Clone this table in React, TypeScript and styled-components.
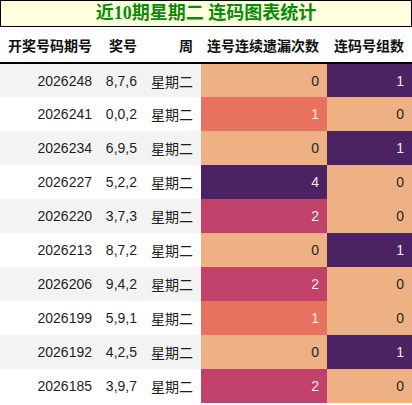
import styled, { createGlobalStyle } from "styled-components";

const GlobalStyle = createGlobalStyle`
  html, body {
    margin: 0;
    padding: 0;
    background: #ffffff;
  }
  body {
    font-family: "Liberation Sans", "Noto Sans CJK SC", sans-serif;
  }
`;

interface Row {
  issue: string;
  nums: string;
  week: string;
  miss: number;
  groups: number;
}

const rows: Row[] = [
  { issue: "2026248", nums: "8,7,6", week: "星期二", miss: 0, groups: 1 },
  { issue: "2026241", nums: "0,0,2", week: "星期二", miss: 1, groups: 0 },
  { issue: "2026234", nums: "6,9,5", week: "星期二", miss: 0, groups: 1 },
  { issue: "2026227", nums: "5,2,2", week: "星期二", miss: 4, groups: 0 },
  { issue: "2026220", nums: "3,7,3", week: "星期二", miss: 2, groups: 0 },
  { issue: "2026213", nums: "8,7,2", week: "星期二", miss: 0, groups: 1 },
  { issue: "2026206", nums: "9,4,2", week: "星期二", miss: 2, groups: 0 },
  { issue: "2026199", nums: "5,9,1", week: "星期二", miss: 1, groups: 0 },
  { issue: "2026192", nums: "4,2,5", week: "星期二", miss: 0, groups: 1 },
  { issue: "2026185", nums: "3,9,7", week: "星期二", miss: 2, groups: 0 },
];

// heat colours, light to dark
const PEACH = "#edb183";
const CORAL = "#e8725f";
const ROSE = "#c1416a";
const PLUM = "#4b2262";

function heat(value: number, max: number) {
  if (value === 0) return PEACH;
  if (value >= max) return PLUM;
  const t = value / max;
  if (t <= 0.25) return CORAL;
  return ROSE;
}

export default function App() {
  return (
    <>
      <GlobalStyle />
      <Wrap>
        <Title>近10期星期二 连码图表统计</Title>
        <Table>
          <colgroup>
            <col style={{ width: 100 }} />
            <col style={{ width: 45 }} />
            <col style={{ width: 56 }} />
            <col style={{ width: 126 }} />
            <col style={{ width: 85 }} />
          </colgroup>
          <thead>
            <tr>
              <Th>开奖号码期号</Th>
              <Th>奖号</Th>
              <Th>周</Th>
              <Th>连号连续遗漏次数</Th>
              <Th>连码号组数</Th>
            </tr>
          </thead>
          <tbody>
            {rows.map((r, i) => (
              <Tr key={r.issue} $striped={i % 2 === 0}>
                <Td>{r.issue}</Td>
                <Td>{r.nums}</Td>
                <Td>{r.week}</Td>
                <HeatCell $bg={heat(r.miss, 4)} $dark={r.miss > 0}>
                  {r.miss}
                </HeatCell>
                <HeatCell $bg={heat(r.groups, 1)} $dark={r.groups > 0}>
                  {r.groups}
                </HeatCell>
              </Tr>
            ))}
          </tbody>
        </Table>
      </Wrap>
    </>
  );
}

const Wrap = styled.div`
  width: 412px;
`;

const Title = styled.div`
  box-sizing: border-box;
  height: 27px;
  border: 1px solid #000;
  background: #ffffdd;
  color: #0a8a0a;
  font-family: "Liberation Serif", "Noto Sans CJK SC", serif;
  font-weight: bold;
  font-size: 18px;
  line-height: 24px;
  text-align: center;
`;

const Table = styled.table`
  width: 412px;
  border-collapse: collapse;
  table-layout: fixed;
  font-size: 14px;
  color: #1e1e1e;
`;

const Th = styled.th`
  height: 35px;
  padding: 0 8px 0 0;
  text-align: right;
  font-weight: bold;
  white-space: nowrap;
  border-bottom: 2px solid #000;
  color: #111;
`;

const Tr = styled.tr<{ $striped: boolean }>`
  height: 34px;
  background: ${(p) => (p.$striped ? "#f3f3f3" : "#ffffff")};
`;

const Td = styled.td`
  padding: 0 8px 0 0;
  text-align: right;
  white-space: nowrap;
`;

const HeatCell = styled(Td)<{ $bg: string; $dark: boolean }>`
  background: ${(p) => p.$bg};
  color: ${(p) => (p.$dark ? "#f2ecef" : "#262626")};
`;
